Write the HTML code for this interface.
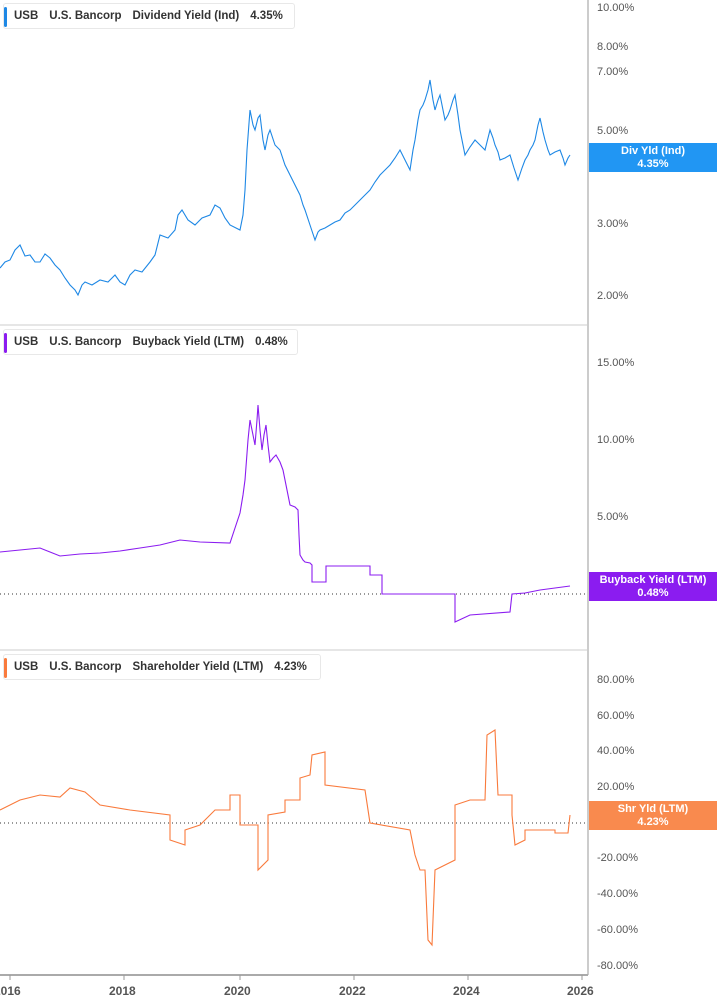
<!DOCTYPE html><html><head><style>
body{margin:0;width:717px;height:1005px;background:#fff;font-family:"Liberation Sans",sans-serif;position:relative;overflow:hidden}
.hd{position:absolute;left:3px;height:26px;border:1px solid #e8e8e8;border-radius:3px;background:#fff;font-size:11.5px;font-weight:bold;color:#333;line-height:25px;padding-left:10px;box-sizing:border-box;white-space:nowrap;letter-spacing:0;overflow:hidden}
.hd i{position:absolute;left:0;top:3px;width:3px;height:20px;border-radius:2px}
.hd span{margin-right:11px}
.ax{position:absolute;left:597px;font-size:11px;color:#555}
.lb{position:absolute;left:589px;width:128px;height:29px;color:#fff;font-size:11px;font-weight:bold;text-align:center;line-height:13px;padding-top:2px;box-sizing:border-box}
.yr{position:absolute;top:984px;font-size:12px;font-weight:bold;color:#555}
</style></head><body>
<svg width="717" height="1005" style="position:absolute;left:0;top:0">
<line x1="588" y1="0" x2="588" y2="975" stroke="#999"/>
<line x1="0" y1="325" x2="588" y2="325" stroke="#ccc"/>
<line x1="0" y1="650" x2="588" y2="650" stroke="#ccc"/>
<line x1="0" y1="975" x2="588" y2="975" stroke="#aaa" stroke-width="2"/>
<g stroke="#999"><line x1="10" y1="975" x2="10" y2="980"/><line x1="124" y1="975" x2="124" y2="980"/><line x1="240" y1="975" x2="240" y2="980"/><line x1="354" y1="975" x2="354" y2="980"/><line x1="468" y1="975" x2="468" y2="980"/><line x1="582" y1="975" x2="582" y2="980"/></g>
<line x1="0" y1="594" x2="588" y2="594" stroke="#333" stroke-dasharray="1,3"/>
<line x1="0" y1="823" x2="588" y2="823" stroke="#333" stroke-dasharray="1,3"/>
<polyline fill="none" stroke="#1e88e5" stroke-width="1.1" points="0,268 5,262 10,260 15,250 20,245 25,256 30,255 35,262 40,262 45,254 50,258 55,265 60,270 65,278 70,285 75,290 78,295 82,285 85,282 92,285 100,280 108,282 115,275 120,282 125,285 130,275 135,270 142,272 150,262 155,255 160,235 168,238 175,230 178,215 182,210 188,220 195,225 202,218 210,215 215,205 220,208 225,218 230,225 236,228 240,230 243,215 245,190 247,150 250,110 253,125 255,130 258,118 260,115 263,140 265,150 268,135 270,130 275,145 280,150 285,165 290,175 295,185 300,195 303,205 305,210 310,225 315,240 318,232 320,230 325,228 330,225 335,222 340,220 345,213 350,210 355,205 360,200 365,195 370,190 375,182 380,175 385,170 390,165 395,158 400,150 405,160 410,170 413,150 415,140 418,120 420,110 423,105 425,100 428,90 430,80 433,100 435,110 438,100 440,95 443,110 445,120 448,115 450,110 453,100 455,95 458,115 460,130 463,145 465,155 470,147 475,140 480,145 485,150 488,138 490,130 493,138 495,145 498,152 500,160 505,158 510,155 514,168 518,180 522,168 525,160 528,155 530,150 533,145 535,140 538,125 540,118 543,132 545,140 548,150 550,155 555,152 560,150 563,158 565,165 568,158 570,155"/>
<polyline fill="none" stroke="#8b1cf0" stroke-width="1.1" points="0,552 20,550 40,548 50,552 60,556 80,554 100,553 120,551 140,548 160,545 180,540 200,542 230,543 235,528 240,513 243,495 245,480 248,440 250,420 253,435 255,445 257,420 258,405 260,430 262,450 264,435 266,425 268,445 270,462 273,458 276,455 280,462 283,470 285,480 288,495 290,505 295,507 298,510 299,535 300,555 303,560 305,562 310,563 312,565 312,582 326,582 326,566 370,566 370,575 382,575 382,594 455,594 455,622 470,615 510,612 512,594 525,593 540,590 555,588 570,586"/>
<polyline fill="none" stroke="#f97a3c" stroke-width="1.1" points="0,810 20,800 40,795 60,797 70,788 85,792 100,805 130,810 170,815 170,840 185,845 185,830 200,825 215,810 230,810 230,795 240,795 240,825 258,825 258,870 268,860 268,815 285,812 285,800 300,800 300,778 310,775 312,755 325,752 325,785 365,790 370,823 410,830 415,855 420,870 425,870 428,940 432,945 435,870 455,860 455,805 470,800 485,800 487,735 495,730 498,795 512,795 512,815 515,845 525,840 525,830 555,830 555,833 568,833 570,815"/>
</svg>
<div class="hd" style="top:3px;width:292px"><i style="background:#1e88e5"></i><span>USB</span><span>U.S. Bancorp</span><span>Dividend Yield (Ind)</span>4.35%</div>
<div class="hd" style="top:329px;width:295px"><i style="background:#8b1cf0"></i><span>USB</span><span>U.S. Bancorp</span><span>Buyback Yield (LTM)</span>0.48%</div>
<div class="hd" style="top:654px;width:318px"><i style="background:#f97a3c"></i><span>USB</span><span>U.S. Bancorp</span><span>Shareholder Yield (LTM)</span>4.23%</div>
<div class="ax" style="top:2px">10.00%</div><div class="ax" style="top:41px">8.00%</div><div class="ax" style="top:66px">7.00%</div><div class="ax" style="top:125px">5.00%</div><div class="ax" style="top:218px">3.00%</div><div class="ax" style="top:290px">2.00%</div>
<div class="ax" style="top:357px">15.00%</div><div class="ax" style="top:434px">10.00%</div><div class="ax" style="top:511px">5.00%</div>
<div class="ax" style="top:674px">80.00%</div><div class="ax" style="top:710px">60.00%</div><div class="ax" style="top:745px">40.00%</div><div class="ax" style="top:781px">20.00%</div><div class="ax" style="top:852px">-20.00%</div><div class="ax" style="top:888px">-40.00%</div><div class="ax" style="top:924px">-60.00%</div><div class="ax" style="top:960px">-80.00%</div>
<div class="lb" style="top:143px;background:#2196f3">Div Yld (Ind)<br>4.35%</div>
<div class="lb" style="top:572px;background:#8b1cf0">Buyback Yield (LTM)<br>0.48%</div>
<div class="lb" style="top:801px;background:#f98a4e">Shr Yld (LTM)<br>4.23%</div>
<div class="yr" style="left:-6px">2016</div><div class="yr" style="left:109px">2018</div><div class="yr" style="left:224px">2020</div><div class="yr" style="left:339px">2022</div><div class="yr" style="left:453px">2024</div><div class="yr" style="left:567px">2026</div>
</body></html>
